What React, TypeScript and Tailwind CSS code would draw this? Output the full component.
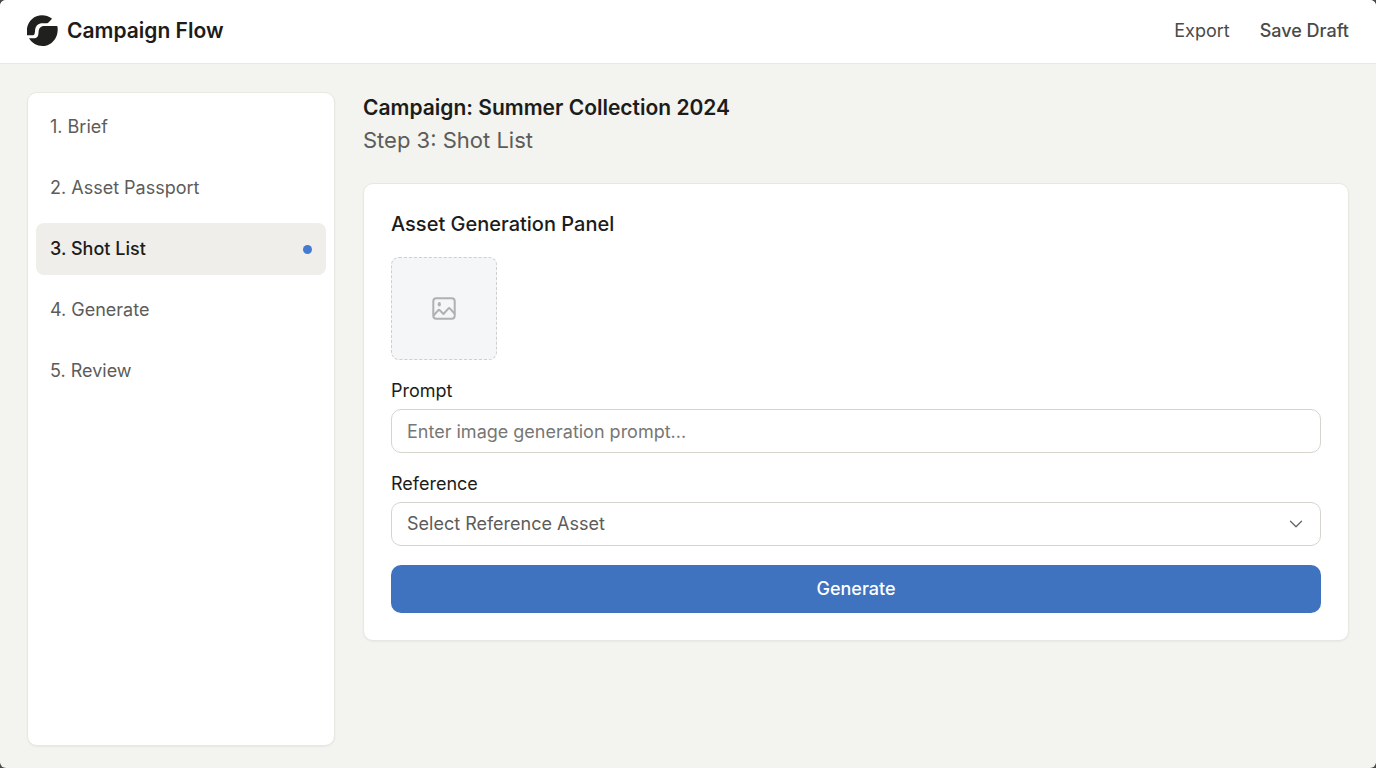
import React, { useState } from 'react';
import clsx from 'clsx';
import { ChevronDown } from 'lucide-react';

const steps = ['Brief', 'Asset Passport', 'Shot List', 'Generate', 'Review'];

const Logo: React.FC = () => (
  <svg className="h-8 w-8" viewBox="0.5 0 32 32" fill="#20201e" aria-hidden="true">
    <path d="M.6 20.300C-1.600 9.500 5.500.2 15.500.2c3.600 0 6.800 1 9.500 3.100.4.3.4.7.1 1l-3.400 3.500c-.3.3-.7.4-1.100.4h-4.400c-4.500 0-7.200 2.600-7.600 6.900-.2 2.700-.3 5.200-2 5.200H.600z" />
    <path d="M2.500 23.300h4.200c4.200 0 5.100-2 5.300-5.600.3-4.400 1.900-6.600 5.900-6.600h12.400c.4 0 .6.2.7.600C32.500 22.300 25.500 31 16 31c-5.700 0-10.500-2.800-13.500-7.700z" />
  </svg>
);

const ImageIcon: React.FC = () => (
  <svg
    className="h-6 w-6 text-[#b0b1b2]"
    viewBox="0 0 24 24"
    fill="none"
    stroke="currentColor"
    strokeWidth="2"
    strokeLinecap="round"
    strokeLinejoin="round"
    aria-hidden="true"
  >
    <rect x="1.300" y="1.300" width="21.400" height="20.400" rx="3" />
    <ellipse cx="7.300" cy="7.300" rx="1.600" ry="2.200" fill="currentColor" stroke="none" />
    <path d="M2 18l4.200-4.700c.5-.5 1-.5 1.500 0l3.800 3.700 5-5.700c.4-.5.9-.5 1.300 0l4.700 5.200" />
  </svg>
);

const App: React.FC = () => {
  const [current, setCurrent] = useState(2);
  const [prompt, setPrompt] = useState('');

  return (
    <div className="bg-[#4a4a48] font-['Inter',sans-serif] text-[#1c1c1a]">
      <div className="flex min-h-screen flex-col overflow-hidden rounded-md bg-[#f3f3ef]">
        <header className="flex h-16 items-center justify-between border-b border-[#e8e8e4] bg-white px-[27px] pb-0.5">
          <div className="flex items-center gap-2">
            <Logo />
            <span className="text-[21px] font-semibold">Campaign Flow</span>
          </div>
          <div className="flex items-center gap-[30px] text-lg text-[#4a4a48]">
            <button type="button">Export</button>
            <button type="button" className="font-medium">Save Draft</button>
          </div>
        </header>

        <div className="flex flex-1 gap-7 px-[27px] pt-7 pb-[22px]">
          {/* Steps */}
          <nav className="flex w-[308px] shrink-0 flex-col gap-[9px] rounded-[10px] border border-[#e8e8e2] bg-white p-2 shadow-xs">
            {steps.map((step, i) => (
              <button
                key={step}
                type="button"
                aria-current={i === current ? 'step' : undefined}
                onClick={() => setCurrent(i)}
                className={clsx(
                  'flex h-[52px] items-center justify-between rounded-lg px-[14px] text-lg',
                  i === current ? 'bg-[#efeeeb] font-medium text-[#1c1c1a]' : 'text-[#5c5c5a]'
                )}
              >
                {i + 1}. {step}
                {i === current && <span className="h-[9px] w-[9px] rounded-full bg-[#447bd0]" />}
              </button>
            ))}
          </nav>

          <main className="min-w-0 flex-1">
            <h1 className="text-[21px] leading-8 font-semibold">Campaign: Summer Collection 2024</h1>
            <p className="text-[22px] leading-8 text-[#5c5c5a]">Step {current + 1}: {steps[current]}</p>

            {/* Generation form */}
            <form
              className="mt-[27px] rounded-[10px] border border-[#e8e8e2] bg-white p-[27px] shadow-xs"
              onSubmit={(e) => e.preventDefault()}
            >
              <h2 className="text-xl leading-[26px] font-medium">Asset Generation Panel</h2>

              <div className="mt-5 flex h-[103px] w-[106px] items-center justify-center rounded-lg border border-dashed border-[#cfcfcf] bg-[#f5f6f7]">
                <ImageIcon />
              </div>

              <label htmlFor="prompt" className="mt-[19px] block text-lg leading-6">Prompt</label>
              <input
                id="prompt"
                type="text"
                value={prompt}
                onChange={(e) => setPrompt(e.target.value)}
                placeholder="Enter image generation prompt..."
                className="mt-[6px] block h-11 w-full rounded-[10px] border border-[#d6d4cc] bg-white px-[15px] text-lg placeholder:text-[#777775]"
              />

              <label htmlFor="reference" className="mt-[19px] block text-lg leading-6">Reference</label>
              <div className="relative mt-[6px]">
                <select
                  id="reference"
                  className="block h-11 w-full appearance-none rounded-[10px] border border-[#d6d4cc] bg-white px-[15px] text-lg text-[#5c5c5a]"
                >
                  <option>Select Reference Asset</option>
                </select>
                <ChevronDown
                  className="pointer-events-none absolute inset-y-0 right-[14px] my-auto h-[22px] w-[22px] text-[#6b6b69]"
                  strokeWidth={1.5}
                />
              </div>

              <button
                type="submit"
                className="mt-[19px] block h-12 w-full rounded-[10px] bg-[#3f73c0] text-lg font-medium text-white"
              >
                Generate
              </button>
            </form>
          </main>
        </div>
      </div>
    </div>
  );
};

export default App;
